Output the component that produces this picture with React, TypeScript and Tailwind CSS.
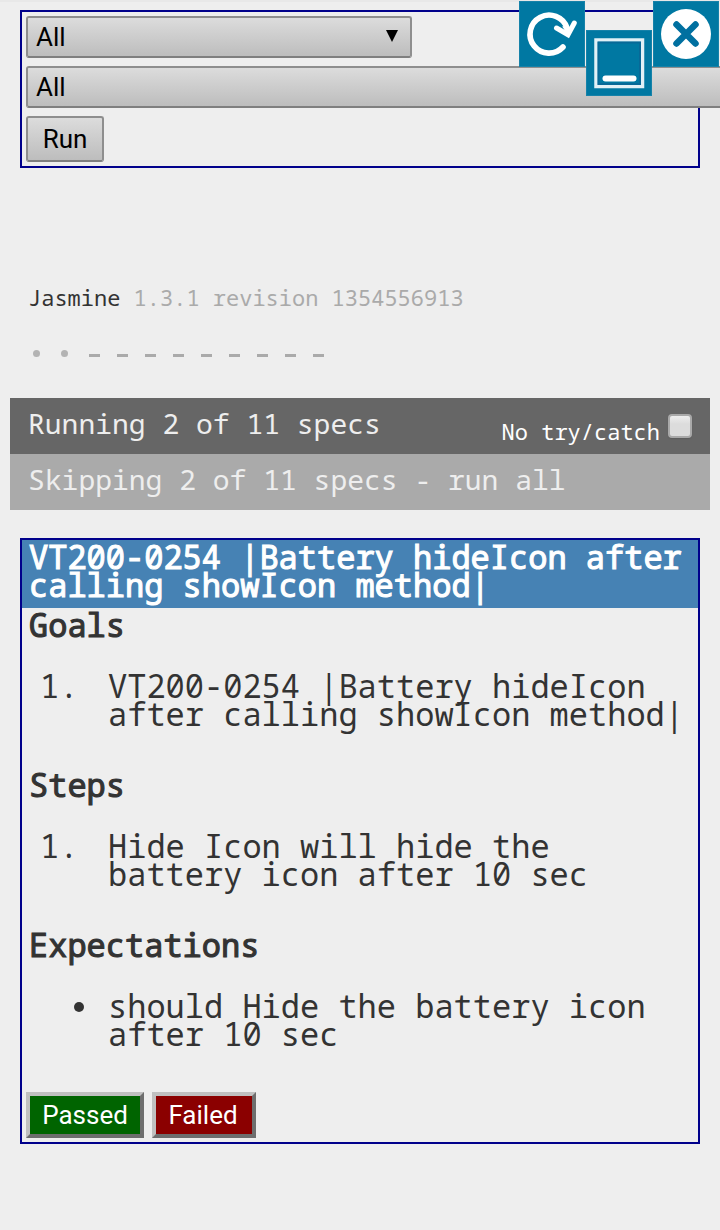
import type { ReactNode } from "react";

const steel = "bg-linear-to-b from-[#dcdcdc] to-[#bdbdbd] border-2 border-[#8e8e8e] border-b-[#7f7f7f] rounded-[3px] text-black text-[26px]";

function Section({ title, marker, children }: { title: string; marker: string; children: ReactNode }) {
  return (
    <section className="h-[160px] pt-[3px] pl-[7px]">
      <h2 className="h-[28px] [-webkit-text-stroke:1.1px_#333]">{title}</h2>
      <div className="mt-[33px] -ml-px flex">
        {marker === "•" ? (
          <span className="mt-[10px] mr-[24px] ml-[46px] block h-[10px] w-[10px] shrink-0 rounded-full bg-[#333]" />
        ) : (
          <span className="w-[80px] shrink-0 pl-[12px]">{marker}</span>
        )}
        <p className="whitespace-nowrap">{children}</p>
      </div>
    </section>
  );
}

export default function App() {
  return (
    <div className="relative h-[1230px] w-[720px] overflow-hidden bg-[#eee] font-['Droid_Sans_Mono','Noto_Sans_Mono','DejaVu_Sans_Mono',monospace] text-[#333]">
      <div className="h-[2px] bg-[#e8e8e8]" />
      <div className="mx-5 mt-2 flex h-[158px] flex-col items-start border-2 border-[#00008b] px-1 pt-1 font-[Roboto,sans-serif]">
        <div className={`${steel} flex h-[42px] w-[386px] items-center justify-between pr-[12px] pl-[8px]`}>
          <span>All</span>
          <svg className="-mt-[3px]" width="12" height="12" viewBox="0 0 12 12"><path d="M0 0h12L6 12z" /></svg>
        </div>
        <div className={`${steel} mt-2 flex h-[42px] w-[760px] shrink-0 items-center pl-[8px]`}>All</div>
        <button className={`${steel} mt-2 h-[46px] w-[78px] shrink-0`}>Run</button>
      </div>

      <div className="absolute top-[1px] left-[519px] flex">
        <svg className="border border-[#1682a9] bg-[#0078a2]" width="66" height="66" viewBox="0 0 64 64" fill="none" stroke="white" strokeWidth="5.6" strokeLinecap="round">
          <path d="M43 45A19 19 0 1 1 47 26" />
          <path d="M36.5 26 48 32.7 54.3 21" strokeWidth="5" strokeLinejoin="miter" />
          <path d="m43 25 5 7 2-6z" fill="white" strokeWidth="1" />
        </svg>
        <svg className="mt-[29px] ml-[1px] border border-[#1682a9] bg-[#0078a2]" width="66" height="66" viewBox="0 0 64 64" fill="none">
          <path d="M9 9h46.500v46.500H9z" stroke="#e1f0f6" strokeWidth="3.5" />
          <path d="M11.500 11.500h41.500v41.500H11.500z" stroke="#086997" strokeWidth="2" />
          <path d="M18.500 47.500h28" stroke="white" strokeWidth="6" strokeLinecap="round" />
        </svg>
        <svg className="ml-[1px] border border-[#1682a9] bg-[#0078a2]" width="66" height="66" viewBox="0 0 64 64">
          <circle cx="32" cy="32" r="25" fill="white" />
          <path d="m22.500 22.500 19 19m0-19-19 19" stroke="#0070a0" strokeWidth="6.500" strokeLinecap="round" />
        </svg>
      </div>

      <div className="mt-[115px] ml-[28px] h-[28px] text-[22px] leading-[28px] text-[#aaa]">
        <span className="text-[#333]">Jasmine</span> 1.3.1 revision 1354556913
      </div>
      <div className="mt-[28px] ml-[32.5px] flex h-[28px] items-center">
        {[0, 1].map((n) => <span key={n} className="mr-[21px] h-[7px] w-[7px] rounded-full bg-[#b3b3b3]" />)}
        {[0, 1, 2, 3, 4, 5, 6, 7, 8].map((n) => <span key={n} className="mt-[4px] mr-[17px] h-[3px] w-[11px] bg-[#aaa]" />)}
      </div>

      <div className="mx-[10px] mt-[31px] text-[28px] text-[#eee]">
        <div className="flex h-[56px] justify-between bg-[#666] pr-[18px] pl-[18px] leading-[50px]">
          <span>Running 2 of 11 specs</span>
          <label className="flex text-[22px] text-white">
            <span className="pt-[8px]">No try/catch</span>
            <span className="mt-4 ml-[8px] h-[24px] w-[24px] rounded-[4px] border-2 border-[#a9a9a9] bg-linear-to-b from-[#eee] to-[#dcdcdc] to-40% shadow-[0_1px_1px_#5558]" />
          </label>
        </div>
        <div className="h-[56px] bg-[#aaa] pl-[18px] leading-[50px]">Skipping 2 of 11 specs - run all</div>
      </div>

      <main className="mx-5 mt-[28px] h-[606px] border-2 border-[#00008b] text-[32px] leading-[28px]">
        <h1 className="h-[68px] bg-[#4682b4] pt-[3px] pl-[7px] whitespace-nowrap text-white [-webkit-text-stroke:1.1px_white]">
          VT200-0254 |Battery hideIcon after<br />calling showIcon method|
        </h1>
        <Section title="Goals" marker="1.">VT200-0254 |Battery hideIcon<br />after calling showIcon method|</Section>
        <Section title="Steps" marker="1.">Hide Icon will hide the<br />battery icon after 10 sec</Section>
        <Section title="Expectations" marker="•">should Hide the battery icon<br />after 10 sec</Section>
        <div className="mt-1 ml-1 flex gap-2 font-[Roboto,sans-serif] text-[26px] text-white">
          <button className="h-[46px] w-[118px] border-4 border-t-[#c0c0c0] border-r-[#6e6e6e] border-b-[#6e6e6e] border-l-[#c0c0c0] bg-[#006400]">Passed</button>
          <button className="h-[46px] w-[104px] border-4 border-t-[#c0c0c0] border-r-[#6e6e6e] border-b-[#6e6e6e] border-l-[#c0c0c0] bg-[#8b0000] pr-[2px]">Failed</button>
        </div>
      </main>
    </div>
  );
}
